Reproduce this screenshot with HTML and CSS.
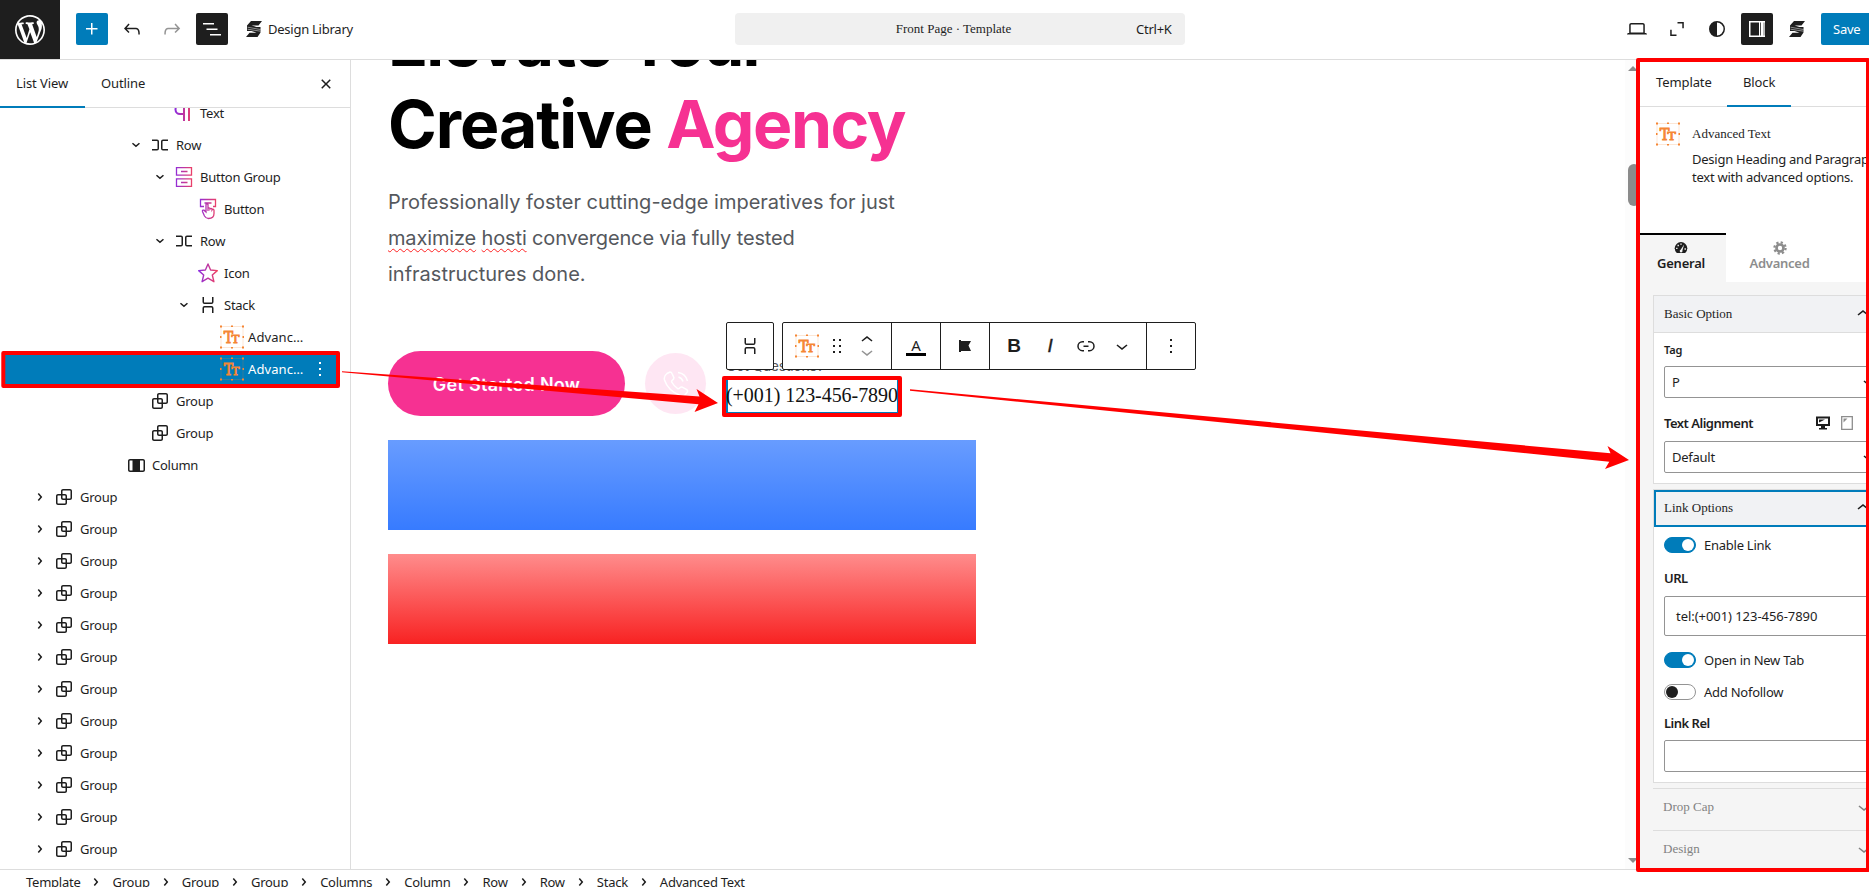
FILE: index.html
```html
<!DOCTYPE html>
<html lang="en">
<head>
  <meta charset="UTF-8">
  <meta name="viewport" content="width=device-width, initial-scale=1.0">
  <title>Front Page - Editor</title>
  <link rel="stylesheet" href="styles.css">
</head>
<body>
  <svg class="sprite">
    <defs>
      <linearGradient id="grad" x1="0" x2="24" y1="0" y2="0" gradientUnits="userSpaceOnUse"><stop offset=".1" stop-color="#8a2be2"/><stop offset=".9" stop-color="#f4425c"/></linearGradient>
    </defs>
    <symbol id="right" viewBox="0 0 24 24"><path d="M10.86 8.04l3.42 3.99-3.42 3.99-1.14-.98 2.58-3.01-2.58-3.01z"/></symbol>
    <symbol id="down" viewBox="0 0 24 24"><path d="M17.5 11.6L12 16l-5.5-4.4.9-1.2L12 14l4.5-3.6 1 1.2z"/></symbol>
    <symbol id="row" viewBox="0 0 24 24"><path d="M4 6.5h5a2 2 0 0 1 2 2v7a2 2 0 0 1-2 2H4V16h5a.5.5 0 0 0 .5-.5v-7A.5.5 0 0 0 9 8H4V6.5Zm16 0h-5a2 2 0 0 0-2 2v7a2 2 0 0 0 2 2h5V16h-5a.5.5 0 0 1-.5-.5v-7A.5.5 0 0 1 15 8h5V6.5Z"/></symbol>
    <symbol id="stack" viewBox="0 0 24 24"><path d="M17.5 4v5a2 2 0 0 1-2 2h-7a2 2 0 0 1-2-2V4H8v5a.5.5 0 0 0 .5.5h7A.5.5 0 0 0 16 9V4h1.5Zm0 16v-5a2 2 0 0 0-2-2h-7a2 2 0 0 0-2 2v5H8v-5a.5.5 0 0 1 .5-.5h7a.5.5 0 0 1 .5.5v5h1.5Z"/></symbol>
    <symbol id="group" viewBox="0 0 24 24"><path d="M18 4h-7c-1.1 0-2 .9-2 2v3H6c-1.1 0-2 .9-2 2v7c0 1.1.9 2 2 2h7c1.1 0 2-.9 2-2v-3h3c1.1 0 2-.9 2-2V6c0-1.1-.9-2-2-2zm-4.5 14c0 .3-.2.5-.5.5H6c-.3 0-.5-.2-.5-.5v-7c0-.3.2-.5.5-.5h3V13c0 1.1.9 2 2 2h2.5v3zm0-4.5H11c-.3 0-.5-.2-.5-.5v-2.5H13c.3 0 .5.2.5.5v2.5zm5-.5c0 .3-.2.5-.5.5h-3V11c0-1.1-.9-2-2-2h-2.5V6c0-.3.2-.5.5-.5h7c.3 0 .5.2.5.5v7z"/></symbol>
    <symbol id="column" viewBox="0 0 24 24"><path d="M19 6H6c-1.1 0-2 .9-2 2v9c0 1.1.9 2 2 2h13c1.1 0 2-.9 2-2V8c0-1.1-.9-2-2-2zM5.500 17V8c0-.3.2-.5.5-.5h2.500v10H6c-.3 0-.5-.2-.5-.5zm14 0c0 .3-.2.5-.5.5h-3v-10h3c.3 0 .5.2.5.5v9z"/></symbol>
    <symbol id="more" viewBox="0 0 24 24"><path d="M13 19h-2v-2h2v2zm0-6h-2v-2h2v2zm0-6h-2V5h2v2z"/></symbol>
    <symbol id="adv" viewBox="0 0 24 24">
      <rect x="1" y="1.500" width="22" height="21" fill="none" stroke="#f58634" stroke-opacity=".2"/>
      <path fill="#f58634" d="M0 .5h2v2H0zM11 .5h2v1.500h-2zM22 .5h2v2h-2zM0 11h1.500v2H0zM22.500 11H24v2h-1.500zM0 21.500h2v2H0zM11 22h2v1.500h-2zM22 21.500h2v2h-2z"/>
      <text x="3.800" y="17.800" font-family="DejaVu Serif, serif" font-size="16" textLength="9.500" lengthAdjust="spacingAndGlyphs" fill="#f58634" stroke="#f58634" stroke-width=".9">T</text>
      <text x="11.500" y="17.800" font-family="DejaVu Serif, serif" font-size="11" textLength="8" lengthAdjust="spacingAndGlyphs" fill="#f58634" stroke="#f58634" stroke-width=".9">T</text>
    </symbol>
    <symbol id="spectra" viewBox="0 0 24 24"><path d="M9 4h11l-3.500 4.500H9.500L14.500 10H18.500v5.500L15.500 20H4l3.500-4.300h7L9.500 14H5V8.500z"/><path d="M5.500 10.200l13 2.300M5.500 12.200l13 2" stroke="#fff" stroke-width=".5"/></symbol>
  </svg>

  <header class="topbar">
    <div class="site-icon"><svg viewBox="0 0 20 20"><path d="M20 10c0-5.510-4.490-10-10-10C4.480 0 0 4.490 0 10c0 5.520 4.480 10 10 10 5.510 0 10-4.480 10-10zM7.780 15.370L4.370 6.220c.55-.02 1.170-.08 1.170-.08.5-.06.44-1.130-.06-1.110 0 0-1.450.11-2.370.11-.18 0-.37 0-.58-.01C4.120 2.690 6.870 1.110 10 1.110c2.330 0 4.450.87 6.050 2.340-.68-.11-1.650.39-1.650 1.580 0 .74.45 1.360.9 2.100.35.61.55 1.360.55 2.460 0 1.490-1.400 5-1.400 5l-3.030-8.370c.54-.02.82-.17.82-.17.5-.05.44-1.250-.06-1.220 0 0-1.440.12-2.380.12-.87 0-2.330-.12-2.330-.12-.5-.03-.56 1.200-.06 1.220l.92.08 1.260 3.410zM17.410 10c.24-.64.74-1.870.43-4.250.7 1.290 1.050 2.710 1.050 4.250 0 3.290-1.730 6.240-4.400 7.780.97-2.590 1.940-5.200 2.920-7.780zM6.100 18.090C3.120 16.650 1.110 13.530 1.110 10c0-1.300.23-2.480.72-3.590C3.250 10.300 4.670 14.200 6.100 18.090zm4.030-6.630l2.580 6.980c-.86.29-1.760.45-2.710.45-.79 0-1.570-.11-2.290-.33.81-2.380 1.620-4.740 2.420-7.100z"/></svg></div>
    <div class="tools">
      <button class="tool blue"><svg viewBox="0 0 24 24"><path d="M11 12.500V17.500H12.500V12.500H17.500V11H12.500V6H11V11H6V12.500H11Z"/></svg></button>
      <button class="tool"><svg viewBox="0 0 24 24"><path d="M18.300 11.700c-.6-.6-1.400-.9-2.300-.9H6.700l2.900-3.300-1.100-1-4.500 5L8.500 16l1-1-2.700-2.700H16c.5 0 .9.2 1.300.5 1 1 1 3.400 1 4.500v.3h1.500v-.2c0-1.500 0-4.300-1.500-5.700z"/></svg></button>
      <button class="tool dim"><svg viewBox="0 0 24 24"><path d="M15.600 6.500l-1.100 1 2.900 3.300H8c-.9 0-1.700.3-2.300.9-1.400 1.500-1.400 4.200-1.400 5.600v.2h1.500v-.3c0-1.100 0-3.500 1-4.500.3-.3.7-.5 1.300-.5h9.200L14.500 15l1.100 1.100 4.600-4.600-4.600-5z"/></svg></button>
      <button class="tool dark"><svg viewBox="0 0 24 24"><path d="M3 6h11v1.500H3V6Zm3.500 5.500h11V13h-11v-1.500ZM21 17H10v1.500h11V17Z"/></svg></button>
      <button class="library"><svg><use href="#spectra"/></svg>Design Library</button>
    </div>
    <div class="docbar"><span class="doc-title">Front Page · Template</span><span class="keys">Ctrl+K</span></div>
    <div class="tools right">
      <button class="tool"><svg viewBox="0 0 24 24"><path d="M20.500 16h-.7V8c0-1.100-.9-2-2-2H6.200c-1.100 0-2 .9-2 2v8h-.7c-.8 0-1.500.7-1.500 1.500h20c0-.8-.7-1.500-1.500-1.500zM5.700 8c0-.3.2-.5.5-.5h11.600c.3 0 .5.2.5.5v7.600H5.700V8z"/></svg></button>
      <button class="tool"><svg viewBox="0 0 24 24"><path d="M12.500 5h6.300v6.300h-1.500V6.500h-4.800zM5.200 12.700h1.500v4.800h4.800V19H5.200z"/></svg></button>
      <button class="tool"><svg viewBox="0 0 24 24"><path d="M12 4a8 8 0 1 0 0 16 8 8 0 0 0 0-16zm0 14.500v-13a6.500 6.500 0 0 1 0 13z"/></svg></button>
      <button class="tool dark"><svg viewBox="0 0 24 24"><path d="M4 4h16v16H4zM5.500 5.500v13h8.500v-13zm9.500 0v13h.8v-13zm3.700 0v13h.6v-13z" fill-rule="evenodd"/></svg></button>
      <button class="tool"><svg><use href="#spectra"/></svg></button>
      <button class="save">Save</button>
    </div>
  </header>

  <div class="main">
    <aside class="listview">
      <div class="list-tabs">
        <a class="active">List View</a>
        <a>Outline</a>
        <button class="close"><svg viewBox="0 0 24 24"><path d="M12 13.060l3.712 3.713 1.061-1.060L13.061 12l3.712-3.712-1.060-1.060L12 10.938 8.288 7.227l-1.061 1.060L10.939 12l-3.712 3.712 1.060 1.061L12 13.061z"/></svg></button>
      </div>
      <div class="tree-wrap">
        <ul class="tree">
          <li class="l5"><i></i><svg viewBox="0 0 24 24"><path d="M17 4v16M12 4v16M12 4H8a4 4 0 0 0 0 9h4" fill="none" stroke="url(#grad)" stroke-width="2"/></svg>Text</li>
          <li class="l4"><svg class="open"><use href="#right"/></svg><svg><use href="#row"/></svg>Row</li>
          <li class="l5"><svg class="open"><use href="#right"/></svg><svg viewBox="0 0 24 24"><path d="M4.500 2.600h15v7.500h-15zM4.500 13.900h15v7.500h-15zM9 6.500h6.500M9 17.500h6.500" fill="none" stroke="url(#grad)" stroke-width="1.300"/></svg>Button Group</li>
          <li class="l6"><i></i><svg viewBox="0 0 24 24"><path d="M8 9.500H4.500v-7h15v7H17M8.500 6h7M12 14V7.500q-1.500-1.500-2 0V15l-2-1.800q-2-.5-1.500 1.300l2 4.500q1.500 2.500 4 2.500c4 0 5.500-2 5.500-5V13q-1-1.500-2 0v-1q-1-1.300-2 0v-.6q-1-1-2 0" fill="none" stroke="url(#grad)" stroke-width="1.300"/></svg>Button</li>
          <li class="l5"><svg class="open"><use href="#right"/></svg><svg><use href="#row"/></svg>Row</li>
          <li class="l6"><i></i><svg viewBox="0 0 24 24"><path d="M12 3l2.600 6 6.700.6-5 4.400 1.600 6.700L12 17.200l-5.900 3.500L7.700 14l-5-4.400 6.700-.6z" fill="none" stroke="url(#grad)" stroke-width="1.400" stroke-linejoin="round"/></svg>Icon</li>
          <li class="l6"><svg class="open"><use href="#right"/></svg><svg><use href="#stack"/></svg>Stack</li>
          <li class="l7"><i></i><svg><use href="#adv"/></svg>Advanc…</li>
          <li class="l7 selected"><i></i><svg><use href="#adv"/></svg>Advanc…<svg class="menu"><use href="#more"/></svg></li>
          <li class="l4"><i></i><svg><use href="#group"/></svg>Group</li>
          <li class="l4"><i></i><svg><use href="#group"/></svg>Group</li>
          <li class="l3"><i></i><svg><use href="#column"/></svg>Column</li>
          <li class="l0"><svg><use href="#right"/></svg><svg><use href="#group"/></svg>Group</li>
          <li class="l0"><svg><use href="#right"/></svg><svg><use href="#group"/></svg>Group</li>
          <li class="l0"><svg><use href="#right"/></svg><svg><use href="#group"/></svg>Group</li>
          <li class="l0"><svg><use href="#right"/></svg><svg><use href="#group"/></svg>Group</li>
          <li class="l0"><svg><use href="#right"/></svg><svg><use href="#group"/></svg>Group</li>
          <li class="l0"><svg><use href="#right"/></svg><svg><use href="#group"/></svg>Group</li>
          <li class="l0"><svg><use href="#right"/></svg><svg><use href="#group"/></svg>Group</li>
          <li class="l0"><svg><use href="#right"/></svg><svg><use href="#group"/></svg>Group</li>
          <li class="l0"><svg><use href="#right"/></svg><svg><use href="#group"/></svg>Group</li>
          <li class="l0"><svg><use href="#right"/></svg><svg><use href="#group"/></svg>Group</li>
          <li class="l0"><svg><use href="#right"/></svg><svg><use href="#group"/></svg>Group</li>
          <li class="l0"><svg><use href="#right"/></svg><svg><use href="#group"/></svg>Group</li>
        </ul>
      </div>
    </aside>

    <main class="canvas">
      <h1><span class="line first">Elevate Your</span><span class="line">Creative <em>Agency</em></span></h1>
      <p class="lead">Professionally foster cutting-edge imperatives for just<br><span class="tight"><u>maximize</u> <u>hosti</u> convergence via fully tested</span><br>infrastructures done.</p>
      <div class="cta">
        <a class="btn">Get Started Now</a>
        <div class="phone-icon"><svg viewBox="0 0 26 26"><path d="M4 2.500l3-1.500q1.500 0 2 1.500l1.800 4q.3 1.500-1.300 2.500-1.500 1-.5 2.500 2 3.500 5.500 6 1.500.8 2.500-.8 1-1.200 2.300-.6l4.500 2.600q1.200 1 .5 2.300L22 24q-2 1.500-5 .5Q5 19.500 1.500 9 .5 5 4 2.500zM15.500 6q3.500 1 4.500 4.500M15 1.500q7.500 1 9.500 8.500"/></svg></div>
        <div class="contact">
          <span class="question">Got Questions?</span>
          <span class="number">(+001) 123-456-7890</span>
        </div>
      </div>
      <div class="band band-blue"></div>
      <div class="band band-red"></div>

      <div class="toolbar">
        <div class="bar"><span class="cell parent"><svg><use href="#stack"/></svg></span></div>
        <div class="bar">
          <span class="cell block-type">
            <svg><use href="#adv"/></svg>
            <svg viewBox="0 0 24 24"><path d="M8 5h2v2H8zM14 5h2v2h-2zM8 11h2v2H8zM14 11h2v2h-2zM8 17h2v2H8zM14 17h2v2h-2z"/></svg>
            <span class="movers"><svg viewBox="6 8 12 8"><path d="M6.500 14.400L12 10l5.500 4.400-.9 1.200L12 12l-4.600 3.600z"/></svg><svg class="dim" viewBox="6 8 12 8"><path d="M17.500 9.600L12 14 6.500 9.600l.9-1.200L12 12l4.600-3.600z"/></svg></span>
          </span>
          <span class="cell color"><b>A</b></span>
          <span class="cell align"><svg viewBox="0 0 24 24"><path d="M6 6h2v1h10l-2.500 4.500L18 17H8v1H6z"/></svg></span>
          <span class="cell format"><b>B</b><i>I</i><svg viewBox="0 0 24 24"><path d="M10 17.389H8.444A5.194 5.194 0 1 1 8.444 7H10v1.500H8.444a3.694 3.694 0 0 0 0 7.389H10v1.500ZM14 7h1.556a5.194 5.194 0 0 1 0 10.390H14v-1.500h1.556a3.694 3.694 0 0 0 0-7.390H14V7Zm-4.500 6h5v-1.500h-5V13Z"/></svg><svg><use href="#down"/></svg></span>
          <span class="cell"><svg><use href="#more"/></svg></span>
        </div>
      </div>
    </main>

    <div class="scrollbar"><span class="up"></span><span class="thumb"></span><span class="down"></span></div>

    <aside class="settings">
      <div class="settings-inner">
        <div class="set-tabs"><a>Template</a><a class="active">Block</a></div>
        <div class="card">
          <svg><use href="#adv"/></svg>
          <div><h2>Advanced Text</h2><p>Design Heading and Paragraph<br>text with advanced options.</p></div>
        </div>
        <div class="modes">
          <a class="active"><svg viewBox="0 0 20 20"><path d="M4 17h12q3-2.500 3-6.500a9 9 0 0 0-18 0Q1 14.500 4 17z"/><path fill="#f5f5f5" d="M3 9.500h2v2H3zM5 5.500h2v2H5zM9 3.500h2v2H9zM15 10.500h2v2h-2zM14.500 5L12 13.500a2 2 0 1 1-2.500-1z"/></svg>General</a>
          <a><svg viewBox="0 0 20 20"><circle cx="10" cy="10" r="5" fill="none" stroke="#8d8d8d" stroke-width="3.800"/><circle cx="10" cy="10" r="8" fill="none" stroke="#8d8d8d" stroke-width="3.200" stroke-dasharray="3.140 3.143"/></svg>Advanced</a>
        </div>
        <div class="options">
          <section class="panel">
            <h3>Basic Option<svg><use href="#down"/></svg></h3>
            <div class="panel-body">
              <label class="small">Tag</label>
              <div class="select">P<svg><use href="#down"/></svg></div>
              <div class="label-row"><label>Text Alignment</label>
                <svg class="monitor" viewBox="0 0 14 14"><path d="M0 .5h14v9.500H9v2h2v1.500H3V12h2v-2H0zM2 2.500V8h10V2.500z" fill-rule="evenodd"/><path d="M3 3.500h6L3 6.500z"/></svg>
                <svg class="tablet" viewBox="0 0 12 14"><path d="M.7.700h10.600v12.600H.7z" fill="none" stroke="#8d8d8d" stroke-width="1.300"/><path d="M2.500 2.500h4l-4 4z" fill="#8d8d8d"/></svg>
              </div>
              <div class="select">Default<svg><use href="#down"/></svg></div>
            </div>
          </section>
          <section class="panel link-panel">
            <h3 class="focused">Link Options<svg><use href="#down"/></svg></h3>
            <div class="panel-body">
              <div class="toggle on"><span></span>Enable Link</div>
              <label class="url-label">URL</label>
              <div class="input tall">tel:(+001) 123-456-7890</div>
              <div class="toggle on"><span></span>Open in New Tab</div>
              <div class="toggle"><span></span>Add Nofollow</div>
              <label class="rel-label">Link Rel</label>
              <div class="input"></div>
            </div>
          </section>
          <h3 class="closed">Drop Cap<svg><use href="#down"/></svg></h3>
          <h3 class="closed">Design<svg><use href="#down"/></svg></h3>
        </div>
      </div>
    </aside>
  </div>

  <footer class="crumbs">
    <span>Template</span><svg><use href="#right"/></svg><span>Group</span><svg><use href="#right"/></svg><span>Group</span><svg><use href="#right"/></svg><span>Group</span><svg><use href="#right"/></svg><span>Columns</span><svg><use href="#right"/></svg><span>Column</span><svg><use href="#right"/></svg><span>Row</span><svg><use href="#right"/></svg><span>Row</span><svg><use href="#right"/></svg><span>Stack</span><svg><use href="#right"/></svg><span>Advanced Text</span>
  </footer>

  <!-- tutorial highlights -->
  <svg class="marks" viewBox="0 0 1869 887">
    <g fill="none" stroke="#f00" stroke-width="4" stroke-linejoin="round">
      <rect x="3.300" y="353" width="334.700" height="33"/>
      <rect x="724" y="378" width="176" height="37"/>
      <rect x="1638" y="60" width="230" height="810"/>
    </g>
    <path fill="#f00" d="M342 371.300L699.500 396.500 696.500 389 718 403 694.500 412 698.500 404.300 342 372.300z"/>
    <path fill="#f00" d="M910 389.300L1610.500 453.300 1607.500 446 1629 460 1605 469 1609.300 461.700 910 390.800z"/>
  </svg>
</body>
</html>
```
FILE: styles.css
```css
* {
  box-sizing: border-box;
}
body {
  margin: 0;
  width: 1869px;
  height: 887px;
  overflow: hidden;
  background: #fff;
  color: #1e1e1e;
  font: 13px/18px "Noto Sans", "Open Sans", sans-serif;
  letter-spacing: -.25px;
  display: flex;
  flex-direction: column;
}
button {
  border: none;
  padding: 0;
  background: none;
  font: inherit;
  color: inherit;
  letter-spacing: inherit;
}
svg {
  width: 24px;
  height: 24px;
  flex: none;
  fill: currentColor;
}
.sprite {
  position: absolute;
  width: 0;
  height: 0;
}
h1, h2, h3, p, ul {
  margin: 0;
  padding: 0;
  font-weight: normal;
}

/* top bar */
.topbar {
  flex: none;
  display: flex;
  height: 60px;
  border-bottom: 1px solid #ddd;
}
.site-icon {
  width: 60px;
  background: #1e1e1e;
  color: #fff;
  display: flex;
  align-items: center;
  justify-content: center;
}
.site-icon svg {
  width: 30px;
  height: 30px;
}
.tools {
  flex: none;
  display: flex;
  align-items: flex-start;
  gap: 8px;
  padding: 13px 0 0 16px;
  width: 675px;
}
.tool {
  flex: none;
  display: flex;
  align-items: center;
  justify-content: center;
  width: 32px;
  height: 32px;
  border-radius: 2px;
}
.blue {
  background: #007cba;
  color: #fff;
}
.dark {
  background: #1e1e1e;
  color: #fff;
}
.dim {
  color: #949494;
}
.library {
  display: flex;
  align-items: center;
  gap: 2px;
  height: 32px;
  margin-left: 6px;
}
.docbar {
  flex: none;
  display: flex;
  align-items: center;
  width: 450px;
  height: 32px;
  margin-top: 13px;
  padding: 0 12px;
  border-radius: 4px;
  background: #f0f0f0;
}
.doc-title {
  flex: 1;
  padding-left: 24px;
  text-align: center;
  font-family: "Liberation Serif", serif;
  letter-spacing: 0;
}
.keys {
  width: 37px;
}
.tools.right {
  width: 684px;
  padding-left: 436px;
  overflow: hidden;
}
.save {
  flex: none;
  width: 52px;
  height: 32px;
  padding-left: 12px;
  border-radius: 2px;
  background: #007cba;
  color: #fff;
  text-align: left;
}

.main {
  flex: none;
  display: flex;
  height: 809px;
}

/* list view */
.listview {
  flex: none;
  width: 351px;
  border-right: 1px solid #ddd;
  display: flex;
  flex-direction: column;
}
.list-tabs {
  flex: none;
  display: flex;
  height: 48px;
  border-bottom: 1px solid #ddd;
}
.list-tabs a {
  height: 48px;
  padding: 0 16px;
  line-height: 47px;
  letter-spacing: -.1px;
}
.list-tabs a.active {
  width: 85px;
  border-bottom: 2px solid #007cba;
}
.close {
  margin-left: auto;
  margin-right: 12px;
}
.close svg {
  display: block;
}
.tree-wrap {
  flex: 1;
  overflow: hidden;
}
.tree {
  margin-top: -11px;
  list-style: none;
}
.tree li {
  display: flex;
  align-items: center;
  height: 32px;
  white-space: nowrap;
}
.tree li > i {
  width: 24px;
}
.tree li > svg:nth-child(2) {
  margin-right: 4px;
}
.tree .open {
  transform: rotate(90deg);
}
.l0 { padding-left: 28px; }
.l3 { padding-left: 100px; }
.l4 { padding-left: 124px; }
.l5 { padding-left: 148px; }
.l6 { padding-left: 172px; }
.l7 {
  padding-left: 196px;
  letter-spacing: .1px;
}
.tree .selected {
  width: 336px;
  margin-left: 3px;
  padding-left: 193px;
  background: #007cba;
  color: #fff;
}
.tree .menu {
  margin-left: auto;
  margin-right: 7px;
}

/* canvas */
.canvas {
  position: relative;
  flex: 1;
  padding-left: 37px;
  overflow: hidden;
}
h1 {
  margin-top: -59px;
  font: 700 66px/82px Inter, sans-serif;
  letter-spacing: -1.05px;
  color: #000;
}
h1 .line {
  display: block;
}
h1 .first {
  letter-spacing: -1.8px;
}
h1 em {
  font-style: normal;
  letter-spacing: -1.4px;
  color: #f63192;
}
.lead {
  margin-top: 19px;
  font: 20px/36px Inter, sans-serif;
  letter-spacing: 0;
  color: #55585d;
}
.lead .tight {
  letter-spacing: -.15px;
}
.lead u {
  text-decoration: underline wavy #f22 1px;
  text-underline-offset: 3px;
}
.cta {
  display: flex;
  align-items: center;
  gap: 20px;
  height: 65px;
  margin-top: 59px;
}
.btn {
  width: 237px;
  height: 65px;
  border-radius: 33px;
  background: #f63192;
  color: #fff;
  font: 600 18px/67px Inter, sans-serif;
  letter-spacing: .3px;
  text-align: center;
}
.phone-icon {
  display: flex;
  align-items: center;
  justify-content: center;
  width: 61px;
  height: 61px;
  border-radius: 50%;
  background: #fee6f3;
}
.phone-icon svg {
  width: 26px;
  height: 26px;
  fill: none;
  stroke: #fff;
  stroke-width: 1.5px;
}
.contact {
  display: flex;
  flex-direction: column;
  width: 173px;
}
.question {
  height: 24px;
  font: 14px/24px Inter, sans-serif;
  color: #55585d;
}
.number {
  height: 36px;
  border: 2px solid #007cba;
  border-top: none;
  text-indent: -2px;
  white-space: nowrap;
  color: #111;
  font: 20px/34px "Liberation Serif", serif;
  letter-spacing: -.05px;
}
.band {
  width: 588px;
  height: 90px;
  margin-top: 24px;
}
.band-blue {
  background: linear-gradient(#689cff, #377bff);
}
.band-red {
  background: linear-gradient(#ff8c8c, #f82222);
}
.toolbar {
  position: absolute;
  left: 375px;
  top: 262px;
  display: flex;
  gap: 8px;
}
.bar {
  display: flex;
  height: 48px;
  border: 1px solid #1e1e1e;
  border-radius: 2px;
  background: #fff;
}
.cell {
  display: flex;
  align-items: center;
  justify-content: center;
  width: 49px;
  border-left: 1px solid #1e1e1e;
}
.cell:first-child {
  border-left: none;
}
.parent {
  width: 46px;
}
.block-type {
  justify-content: flex-start;
  width: 108px;
  padding-left: 12px;
  gap: 6px;
}
.movers {
  display: flex;
  flex-direction: column;
  gap: 8px;
  margin-left: 6px;
}
.movers svg {
  width: 12px;
  height: 8px;
}
.color b {
  width: 20px;
  border-bottom: 3px solid #000;
  text-align: center;
  font: 15px/16px "Noto Sans", sans-serif;
}
.format {
  width: 157px;
  gap: 12px;
}
.format b, .format i {
  width: 24px;
  text-align: center;
  font: 700 19px/24px "Liberation Sans", sans-serif;
}
.format i {
  font-style: italic;
  font-weight: 400;
  -webkit-text-stroke: .4px;
}

.scrollbar {
  flex: none;
  display: flex;
  flex-direction: column;
  width: 15px;
  padding: 6px 0 6px 3px;
  background: #fcfcfc;
}
.up, .down {
  border: 5px solid transparent;
  border-top: none;
  border-bottom-color: #8b8b8b;
  width: 10px;
}
.down {
  margin-top: auto;
  border-bottom: none;
  border-top: 5px solid #8b8b8b;
}
.thumb {
  width: 12px;
  height: 42px;
  margin-top: 93px;
  border-radius: 6px;
  background: #8b8b8b;
}

/* block settings */
.settings {
  flex: none;
  width: 229px;
  height: 812px;
  overflow: hidden;
  background: #fff;
}
.settings-inner {
  width: 280px;
}
.set-tabs {
  display: flex;
  height: 47px;
  border-bottom: 1px solid #ddd;
}
.set-tabs a {
  width: 87px;
  height: 47px;
  padding-left: 16px;
  line-height: 44px;
  letter-spacing: -.1px;
}
.set-tabs a.active {
  width: 64px;
  border-bottom: 2px solid #007cba;
}
.card {
  display: flex;
  gap: 12px;
  height: 126px;
  padding: 15px 0 0 16px;
}
.card div {
  white-space: nowrap;
}
.card h2 {
  margin: 3px 0 7px;
  font: 13px/18px "Liberation Serif", serif;
  letter-spacing: 0;
}
.modes {
  display: flex;
  height: 49px;
}
.modes a {
  display: flex;
  flex-direction: column;
  align-items: center;
  width: 86px;
  padding-top: 6px;
  border-top: 2px solid transparent;
  color: #8d8d8d;
  font-weight: 600;
  line-height: 17px;
}
.modes a svg {
  width: 14px;
  height: 14px;
}
.modes a:last-child {
  width: 107px;
}
.modes .active {
  padding-right: 4px;
  border-top-color: #000;
  background: #f5f5f5;
  color: #1e1e1e;
}
.options {
  padding: 13px 0 0 13px;
  height: 600px;
  background: #f5f5f5;
}
.panel {
  height: 189px;
  border: 1px solid #ddd;
  background: #fff;
}
h3 {
  display: flex;
  align-items: center;
  height: 37px;
  padding-left: 10px;
  background: #f1f2f4;
  border-bottom: 1px solid #ddd;
  font: 13px/18px "Liberation Serif", serif;
  letter-spacing: 0;
}
h3 svg {
  margin-left: auto;
  margin-right: 44px;
  transform: rotate(180deg);
}
.panel-body {
  padding: 8px 0 0 10px;
}
.panel label {
  display: block;
  font-weight: 600;
  letter-spacing: -.5px;
}
.panel .small {
  font-size: 11px;
  height: 25px;
  line-height: 18px;
  letter-spacing: -.2px;
}
.select, .input {
  display: flex;
  align-items: center;
  justify-content: space-between;
  width: 218px;
  height: 32px;
  padding-left: 7px;
  border: 1px solid #949494;
  border-radius: 2px;
}
.label-row {
  display: flex;
  align-items: center;
  height: 43px;
  padding-top: 7px;
}
.label-row label {
  width: 152px;
}
.monitor {
  width: 14px;
  height: 14px;
}
.tablet {
  width: 12px;
  height: 14px;
  margin-left: 11px;
}
.link-panel {
  height: 294px;
  margin-top: 5px;
}
h3.focused {
  height: 37px;
  border: 2px solid #007cba;
  padding: 0 0 2px 8px;
}
.focused svg {
  margin-right: 42px;
}
.link-panel .panel-body {
  padding-top: 10px;
}
.toggle {
  display: flex;
  align-items: center;
  gap: 8px;
  height: 16px;
  margin-bottom: 16px;
}
.toggle span {
  width: 32px;
  height: 16px;
  padding: 1px;
  border: 1px solid #949494;
  border-radius: 8px;
}
.toggle span::before {
  content: '';
  display: block;
  width: 12px;
  height: 12px;
  border-radius: 50%;
  background: #1e1e1e;
}
.toggle.on span {
  border-color: #007cba;
  background: #007cba;
}
.toggle.on span::before {
  margin-left: 16px;
  background: #fff;
}
.link-panel .url-label {
  height: 27px;
}
.tall {
  height: 40px;
  padding-left: 11px;
  margin-bottom: 16px;
  letter-spacing: -.05px;
}
.link-panel .rel-label {
  margin-top: -2px;
  height: 26px;
}
.closed {
  height: 42px;
  padding-bottom: 5px;
  border-top: 1px solid #ddd;
  border-bottom: none;
  background: none;
  color: #828282;
}
.link-panel + .closed {
  margin-top: 5px;
}
.closed svg {
  transform: none;
}

/* breadcrumb */
.crumbs {
  flex: none;
  display: flex;
  align-items: center;
  height: 25px;
  padding-left: 26px;
  border-top: 1px solid #ddd;
  background: #fff;
  position: relative;
}
.crumbs svg {
  margin: 0 4px;
}

.marks {
  position: absolute;
  left: 0;
  top: 0;
  width: 1869px;
  height: 887px;
}
```
